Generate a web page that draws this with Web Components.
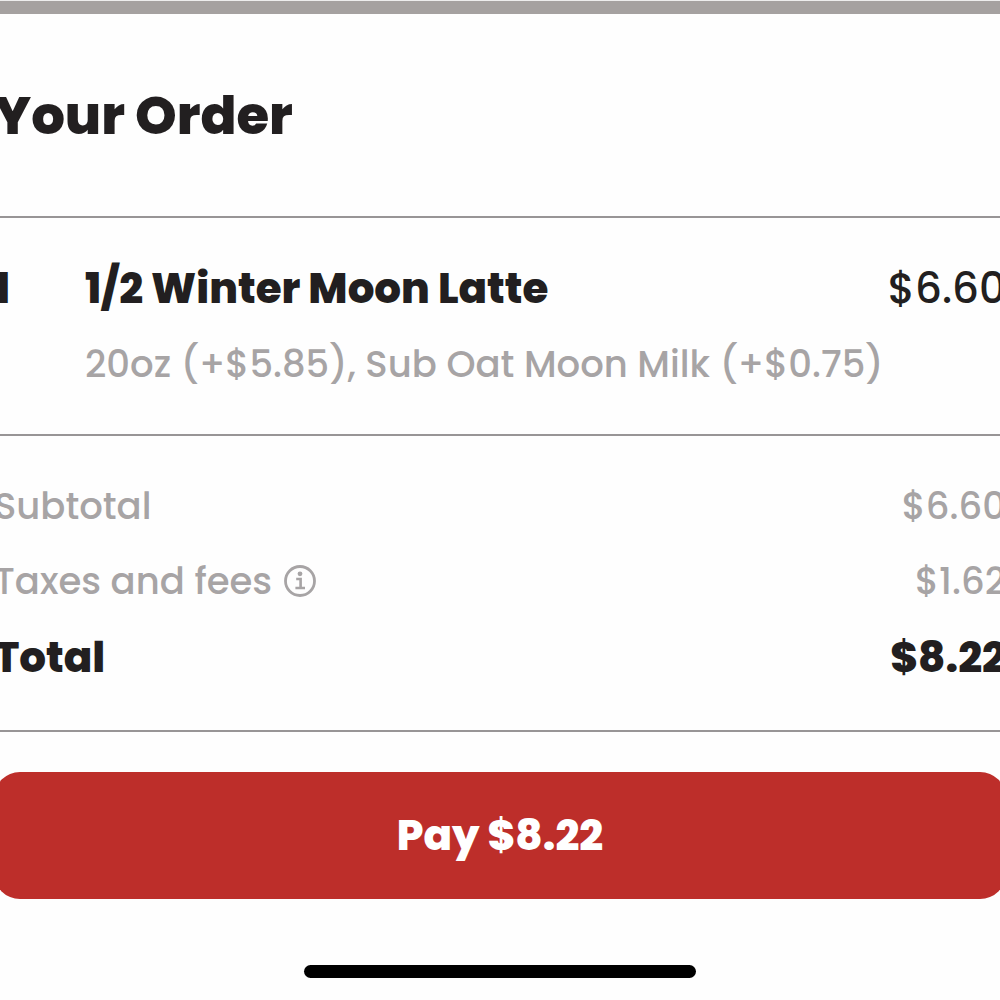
<!DOCTYPE html>
<html lang="en">
<head>
<meta charset="utf-8">
<meta name="viewport" content="width=device-width, initial-scale=1">
<title>Your Order</title>
<style>
  body{
    margin:0;
    overflow-x:hidden;
    background:#fefefe;
    color:#221f20;
    font-family:Poppins, Inter, sans-serif;
    font-weight:500;
    --muted:#a7a4a5;
    --line:#989596;
    --accent:#bd2e2a;
  }
</style>
</head>
<body>
<order-sheet>
  <order-section>
    <order-title>Your Order</order-title>
  </order-section>
  <order-section>
    <order-item qty="1" price="$6.60">
      1/2 Winter Moon Latte
      <span slot="options">20oz (+$5.85), Sub Oat Moon Milk (+$0.75)</span>
    </order-item>
  </order-section>
  <order-section>
    <order-totals>
      <total-row amount="$6.60">Subtotal</total-row>
      <total-row amount="$1.62">Taxes and fees <info-button slot="info"></info-button></total-row>
      <total-row amount="$8.22" strong>Total</total-row>
    </order-totals>
  </order-section>
  <pay-button>Pay $8.22</pay-button>
</order-sheet>
<home-indicator></home-indicator>

<script>
function define(name, html, setup){
  const template = document.createElement('template');
  template.innerHTML = html;

  window.customElements.define(name, class extends HTMLElement{
    constructor(){
      super();
      this.attachShadow({mode: 'open'})
      this.shadowRoot.appendChild(template.content.cloneNode(true))
      if(setup) setup(this, this.shadowRoot)
    }
  })
}

define('order-sheet', `
 <style>
  :host{
    display:block;
    border-top:1px solid #ededed;
    overflow:hidden;
  }
  .handle{
    height:13px;
    background:#a5a1a0;
  }
  main{
    margin:0 -6px;
  }
 </style>
 <div class="handle"></div>
 <main><slot></slot></main>
`)

define('order-section', `
 <style>
  :host{
    display:block;
    padding:40px 0;
    border-bottom:2px solid var(--line);
  }
 </style>
 <slot></slot>
`)

define('order-title', `
 <style>
  :host{
    display:block;
    padding:30px 0 28px;
  }
  h1{
    margin:0;
    font-size:53px;
    line-height:64px;
    font-weight:800;
  }
 </style>
 <h1><slot></slot></h1>
`)

define('order-item', `
 <style>
  :host{
    display:grid;
    grid-template-columns:91px 1fr auto;
    row-gap:14px;
    font-size:42px;
    line-height:62px;
  }
  .qty, .name{
    font-weight:800;
  }
  .name{
    margin:0;
    font-size:inherit;
  }
  .options{
    grid-column:2 / -1;
    font-size:37px;
    line-height:60px;
    color:var(--muted);
    white-space:nowrap;
  }
 </style>
 <span class="qty"></span>
 <h2 class="name"><slot></slot></h2>
 <span class="price"></span>
 <div class="options"><slot name="options"></slot></div>
`, (el, root) => {
  root.querySelector('.qty').textContent = el.getAttribute('qty')
  root.querySelector('.price').textContent = el.getAttribute('price')
})

define('order-totals', `
 <style>
  :host{
    display:flex;
    flex-direction:column;
    gap:15px;
  }
 </style>
 <slot></slot>
`)

define('total-row', `
 <style>
  :host{
    display:flex;
    justify-content:space-between;
    font-size:37px;
    line-height:60px;
    color:var(--muted);
  }
  :host([strong]){
    font-size:42px;
    line-height:64px;
    font-weight:800;
    color:#221f20;
  }
  .label{
    display:flex;
    align-items:center;
    gap:12px;
  }
 </style>
 <span class="label"><span><slot></slot></span><slot name="info"></slot></span>
 <span class="amount"></span>
`, (el, root) => {
  root.querySelector('.amount').textContent = el.getAttribute('amount')
})

define('info-button', `
 <style>
  :host{
    display:inline-flex;
  }
  button{
    display:flex;
    padding:0;
    border:0;
    background:none;
    color:inherit;
    cursor:pointer;
  }
 </style>
 <button type="button" aria-label="About taxes and fees">
   <svg width="32" height="32" viewBox="0 0 32 32" fill="none" stroke="currentColor">
     <circle cx="16" cy="16" r="14.5" stroke-width="2.8"/>
     <circle cx="16" cy="8.8" r="2.4" fill="currentColor" stroke="none"/>
     <path d="M12.2 14H16.6V23M11.4 23H21" stroke-width="2.6"/>
   </svg>
 </button>
`)

define('pay-button', `
 <style>
  :host{
    display:block;
    margin-top:40px;
  }
  button{
    display:block;
    width:100%;
    padding:32px;
    border:0;
    border-radius:26px;
    background:var(--accent);
    color:#fff;
    font-family:inherit;
    font-size:42px;
    line-height:63px;
    font-weight:800;
    cursor:pointer;
  }
 </style>
 <button type="button"><slot></slot></button>
`)

define('home-indicator', `
 <style>
  :host{
    display:block;
    width:392px;
    max-width:80%;
    height:13px;
    margin:66px auto 22px;
    border-radius:8px;
    background:#000;
  }
 </style>
`)
</script>
</body>
</html>
